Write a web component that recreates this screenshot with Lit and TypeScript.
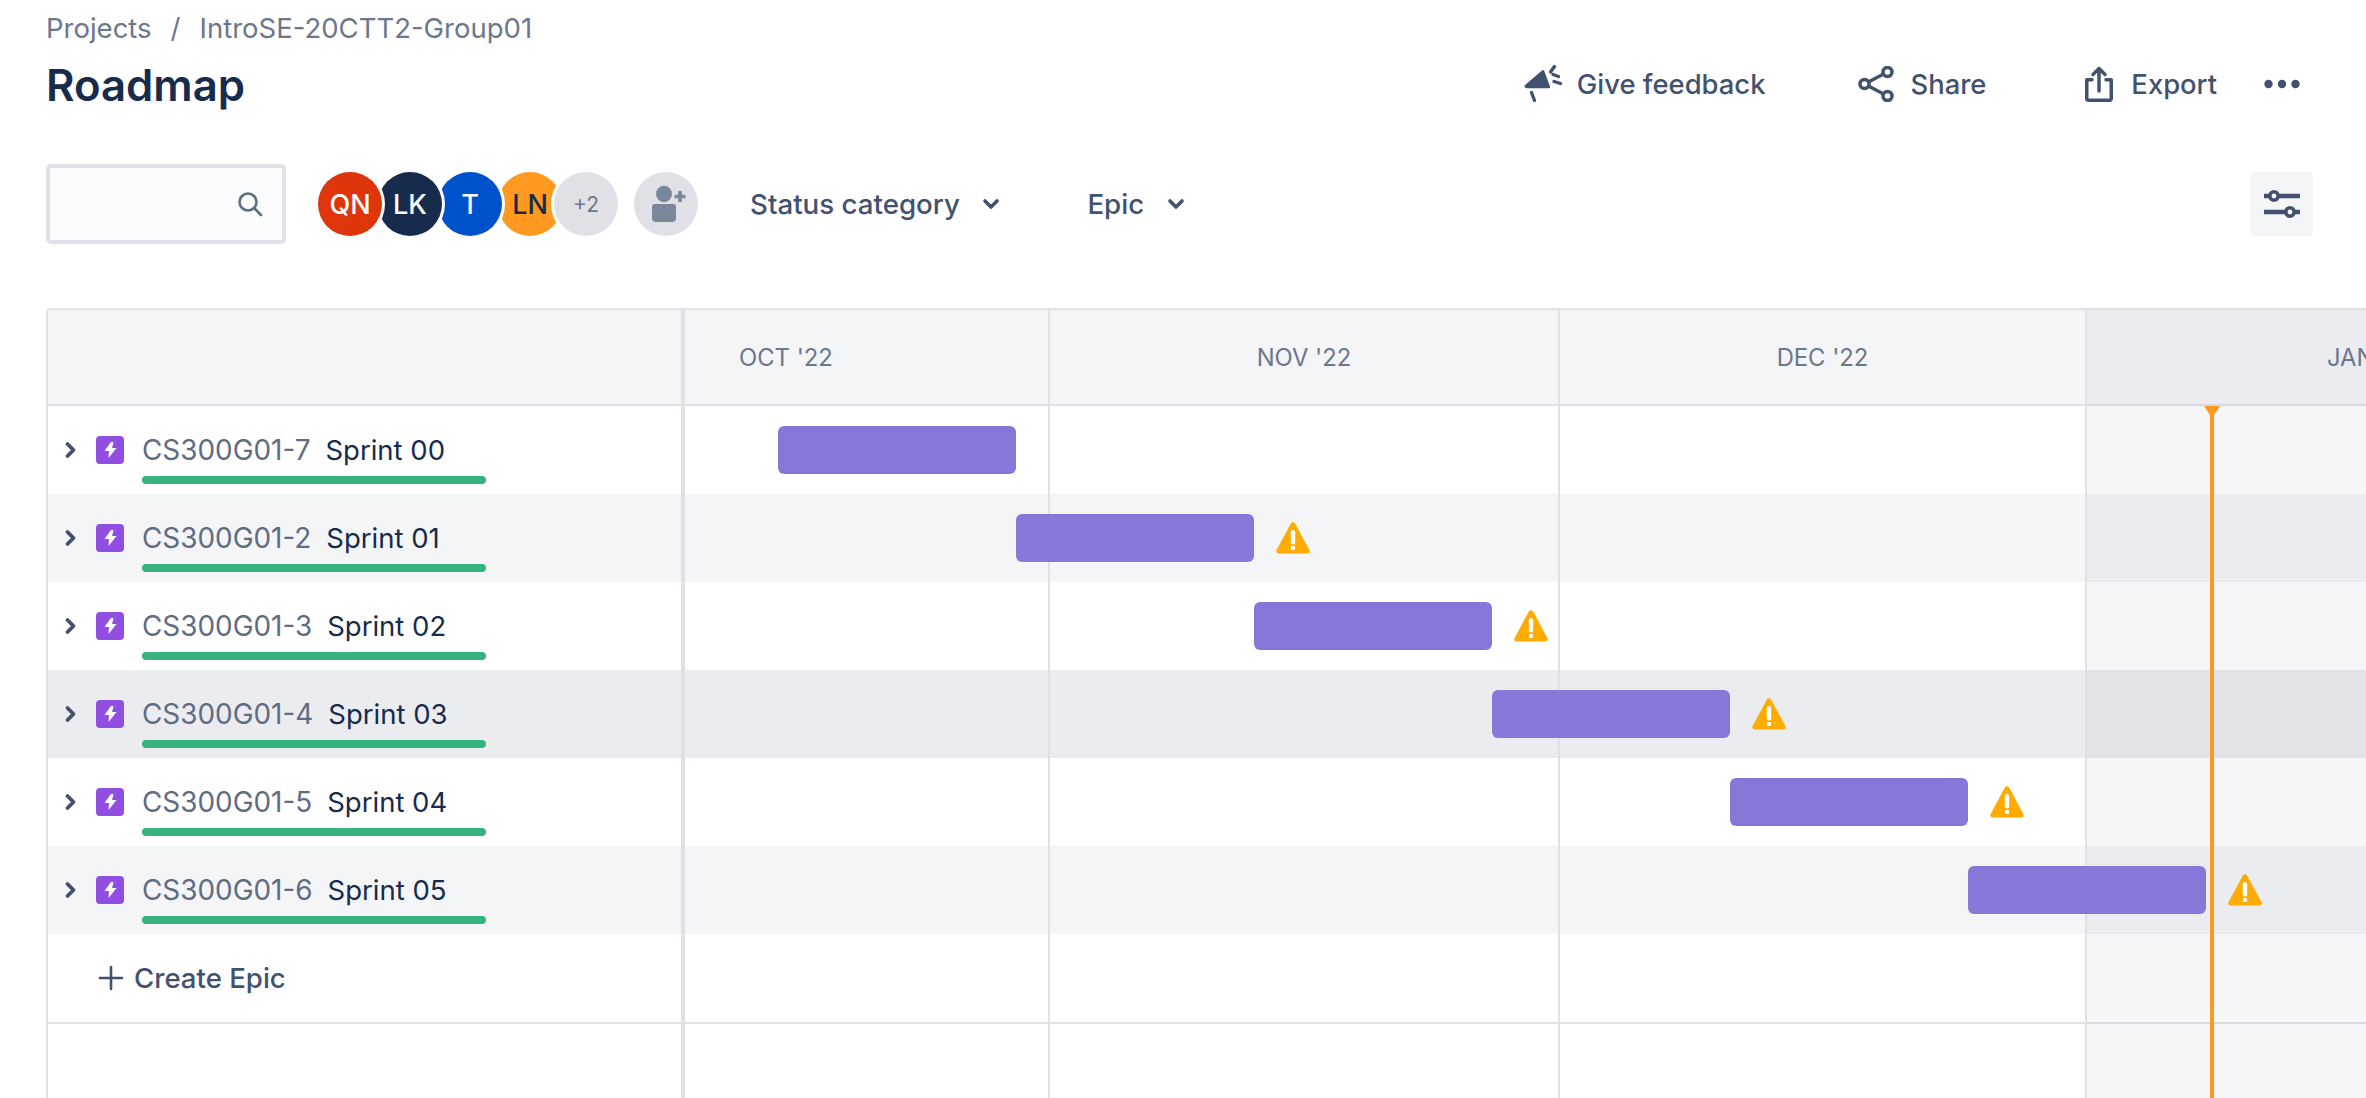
import { LitElement, html, css, svg } from 'lit';
import { customElement } from 'lit/decorators.js';

const BAR_WIDTH = 238;
const FIRST_BAR = 93;

const sprints = [
  { key: 'CS300G01-7', name: 'Sprint 00', warn: false, tone: '' },
  { key: 'CS300G01-2', name: 'Sprint 01', warn: true, tone: 'alt' },
  { key: 'CS300G01-3', name: 'Sprint 02', warn: true, tone: '' },
  { key: 'CS300G01-4', name: 'Sprint 03', warn: true, tone: 'hover' },
  { key: 'CS300G01-5', name: 'Sprint 04', warn: true, tone: '' },
  { key: 'CS300G01-6', name: 'Sprint 05', warn: true, tone: 'alt' },
];

const people = [
  { text: 'QN', cls: 'red' },
  { text: 'LK', cls: 'navy' },
  { text: 'T', cls: 'blue' },
  { text: 'LN', cls: 'orange' },
];

const megaphone = svg`<path d="M1 21 L18 6.5 a1.5 1.5 0 0 1 2.3.6 L26 22.5 a1.2 1.2 0 0 1-1.1 1.7 H2.5 a2 2 0 0 1-1.5-3.2z" fill="currentColor"/><path d="M7.5 28.5 L10.5 36.5 M26.5 8 L30.5 2.5 M29 10.5 L34.5 12.5 M30 17.5 L36.5 19.5" stroke="currentColor" stroke-width="3.4" stroke-linecap="round" fill="none"/>`;

@customElement('app-root')
export class AppRoot extends LitElement {
  static styles = css`
    :host {
      display: block;
      width: 2366px;
      height: 1098px;
      overflow: hidden;
      background: #fff;
      font-family: Inter, 'Noto Sans', sans-serif;
      color: #42526e;
    }
    .crumbs {
      display: flex;
      gap: 19px;
      padding: 12px 0 0 46px;
      height: 32px;
      font-size: 27.5px;
      line-height: 32px;
      color: #6b778c;
    }
    .title-row {
      display: flex;
      align-items: center;
      height: 66px;
      padding: 7px 0 0 46px;
    }
    h1 {
      margin: 3px 0 0;
      font-size: 43.7px;
      line-height: 56px;
      font-weight: 600;
      color: #172b4d;
    }
    .actions {
      display: flex;
      align-items: center;
      margin-left: auto;
      font-size: 27.4px;
      font-weight: 500;
      color: #42526e;
    }
    .action {
      display: flex;
      align-items: center;
      gap: 14px;
    }
    .action svg { display: block; }
    .action.feedback { margin-right: 93px; gap: 13px; }
    .action.share { margin-right: 99px; gap: 16px; }
    .action.export { margin-right: 47px; gap: 18px; }
    .dots { margin-right: 66px; display: block; }

    .toolbar {
      display: flex;
      align-items: center;
      height: 80px;
      margin-top: 47px;
      padding-left: 46px;
    }
    .search {
      box-sizing: border-box;
      width: 240px;
      height: 80px;
      border: 4px solid #dfe1e6;
      border-radius: 5px;
      background: #fafbfc;
      display: flex;
      align-items: center;
      justify-content: flex-end;
      padding-right: 19px;
    }
    .people {
      display: flex;
      margin-left: 32px;
    }
    .avatar {
      box-sizing: border-box;
      width: 64px;
      height: 64px;
      border-radius: 50%;
      display: flex;
      align-items: center;
      justify-content: center;
      font-size: 27px;
      font-weight: 500;
      color: #fff;
      box-shadow: 0 0 0 3px #fff;
      margin-right: -4px;
      position: relative;
    }
    .avatar.red { background: #de350b; z-index: 4; }
    .avatar.navy { background: #172b4d; z-index: 3; }
    .avatar.blue { background: #0052cc; z-index: 2; }
    .avatar.orange { background: #ff991f; color: #172b4d; z-index: 1; margin-right: -8px; }
    .avatar.more {
      background: #dfe1e6;
      color: #6b778c;
      font-size: 21px;
      font-weight: 400;
      z-index: 2;
      margin-right: 0;
    }
    .add {
      width: 64px;
      height: 64px;
      margin-left: 16px;
      border-radius: 50%;
      background: #dfe1e6;
      display: flex;
      align-items: center;
      justify-content: center;
    }
    .filter {
      display: flex;
      align-items: center;
      gap: 22.5px;
      font-size: 27.7px;
      font-weight: 500;
      color: #42526e;
    }
    .filter.status { margin-left: 52px; }
    .filter.epic { margin-left: 87px; }
    .view-settings {
      margin-left: auto;
      margin-right: 53px;
      width: 63px;
      height: 64px;
      border-radius: 5px;
      background: #f4f5f7;
      display: flex;
      align-items: center;
      justify-content: center;
    }

    .board {
      position: relative;
      margin: 64px 0 0 46px;
      height: 790px;
      border-left: 2px solid #dfe1e6;
      border-top: 2px solid #dfe1e6;
      border-top-left-radius: 5px;
    }
    .board-row {
      display: flex;
      height: 88px;
    }
    .board-row.head {
      height: 94px;
      background: #f4f5f7;
      border-bottom: 2px solid #dfe1e6;
    }
    .board-row.alt { background: #f4f5f7; }
    .board-row.hover { background: #ebecf0; }
    .board-row.foot {
      height: 88px;
      border-bottom: 2px solid #dfe1e6;
    }
    .side {
      box-sizing: border-box;
      width: 637px;
      flex: none;
    }
    .epic-cell {
      display: grid;
      grid-template-columns: 28px 1fr;
      grid-template-rows: 32px 8px;
      column-gap: 18px;
      row-gap: 10px;
      align-content: start;
      padding: 28px 0 0 48px;
      position: relative;
    }
    .chevron {
      position: absolute;
      left: 16px;
      top: 32px;
      display: block;
    }
    .epic-icon {
      width: 28px;
      height: 28px;
      align-self: center;
      border-radius: 4px;
      background: #904ee2;
      display: flex;
      align-items: center;
      justify-content: center;
    }
    .epic-label {
      display: flex;
      gap: 15px;
      font-size: 27.9px;
      line-height: 32px;
      white-space: nowrap;
    }
    .epic-key { color: #5e6c84; }
    .epic-name { color: #172b4d; font-weight: 400; font-size: 27.5px; }
    .progress {
      grid-column: 2;
      width: 344px;
      height: 8px;
      border-radius: 4px;
      background: #36b37e;
    }
    .create {
      display: flex;
      align-items: center;
      gap: 10px;
      padding-left: 50px;
      font-size: 27.6px;
      font-weight: 500;
      color: #42526e;
    }
    .track {
      flex: 1;
      display: flex;
      align-items: center;
      min-width: 0;
      position: relative;
      z-index: 2;
    }
    .bar {
      height: 48px;
      width: 238px;
      border-radius: 6px;
      background: #8777d9;
      flex: none;
    }
    .warn { margin-left: 22px; flex: none; display: block; }
    .months {
      flex: 1;
      font-size: 23.8px;
      color: #6b778c;
      display: grid;
      grid-template-columns: 364px 510px 527px 400px;
      align-items: center;
      white-space: nowrap;
      position: relative;
      z-index: 2;
    }
    .month { text-align: center; }
    .month.oct { text-align: left; padding-left: 54px; }
    .month.jan { text-align: left; padding-left: 241px; }

    /* grid lines and the shaded current month, under the bars */
    .overlay {
      position: absolute;
      top: 0;
      bottom: 0;
      left: 633px;
      right: 0;
      display: grid;
      grid-template-columns: 4px 365px 510px 527px 1fr;
      pointer-events: none;
      z-index: 1;
    }
    .divider { background: #dfe1e6; }
    .col { border-right: 2px solid #dfe1e6; box-sizing: border-box; }
    .col.today-col { border-right: 0; background: rgba(9, 30, 66, 0.04); }
    .today {
      position: absolute;
      top: 96px;
      bottom: 0;
      left: 2162px;
      width: 4px;
      background: #ff991f;
      z-index: 3;
    }
    .today::before {
      content: '';
      position: absolute;
      top: 0;
      left: -6px;
      border-top: 12px solid #ff991f;
      border-left: 8px solid transparent;
      border-right: 8px solid transparent;
    }
  `;

  renderRow(s: (typeof sprints)[number], i: number) {
    return html`<div class="board-row ${s.tone}">
      <div class="side epic-cell">
        <svg class="chevron" width="14" height="24" viewBox="0 0 14 24"><path d="M3.5 6 L9.5 12 L3.5 18" fill="none" stroke="#42526e" stroke-width="3.8" stroke-linecap="round" stroke-linejoin="round"/></svg>
        <div class="epic-icon">
          <svg width="13" height="16" viewBox="0 0 13 16"><path d="M7 0 L0.5 9 H5 L4.5 16 L12.5 6 H8 L9.5 0 z" fill="#fff"/></svg>
        </div>
        <div class="epic-label"><span class="epic-key">${s.key}</span><span class="epic-name">${s.name}</span></div>
        <div class="progress"></div>
      </div>
      <div class="track">
        <div class="bar" style="margin-left:${FIRST_BAR + i * BAR_WIDTH}px"></div>
        ${s.warn
          ? html`<svg class="warn" width="34" height="32" viewBox="0 0 34 32">
              <path d="M15 1.2 a2.4 2.4 0 0 1 4 0 L33.4 28 a2.4 2.4 0 0 1-2 3.6 H2.6 a2.4 2.4 0 0 1-2-3.6 z" fill="#ffab00"/>
              <rect x="14.8" y="8" width="4.4" height="14.5" rx="2.2" fill="#fff"/>
              <circle cx="17" cy="26" r="2.3" fill="#fff"/>
            </svg>`
          : ''}
      </div>
    </div>`;
  }

  render() {
    return html`
      <div class="crumbs"><span>Projects</span><span>/</span><span>IntroSE-20CTT2-Group01</span></div>
      <div class="title-row">
        <h1>Roadmap</h1>
        <div class="actions">
          <div class="action feedback">
            <svg width="40" height="40" viewBox="0 0 40 40">${megaphone}</svg>
            <span>Give feedback</span>
          </div>
          <div class="action share">
            <svg width="36" height="36" viewBox="0 0 36 36" fill="none" stroke="currentColor" stroke-width="3.5">
              <circle cx="6.5" cy="18" r="4.5"/><circle cx="29.5" cy="6" r="4.5"/><circle cx="29.5" cy="30" r="4.5"/>
              <path d="M10.5 16 L25.5 8 M10.5 20 L25.5 28"/>
            </svg>
            <span>Share</span>
          </div>
          <div class="action export">
            <svg width="28" height="36" viewBox="0 0 28 36" fill="none" stroke="currentColor" stroke-width="3.5" stroke-linejoin="round" stroke-linecap="round">
              <path d="M7 13.75 H1.75 V32.25 a2 2 0 0 0 2 2 H24.25 a2 2 0 0 0 2-2 V13.75 H21"/>
              <path d="M14 25 V2.5 M8 8.5 L14 2.5 L20 8.5"/>
            </svg>
            <span>Export</span>
          </div>
          <svg class="dots" width="36" height="10" viewBox="0 0 36 10" fill="currentColor">
            <circle cx="4.5" cy="5" r="4.2"/><circle cx="18" cy="5" r="4.2"/><circle cx="31.5" cy="5" r="4.2"/>
          </svg>
        </div>
      </div>
      <div class="toolbar">
        <div class="search">
          <svg width="26" height="26" viewBox="0 0 26 26" fill="none" stroke="#5e6c84" stroke-width="2.6" stroke-linecap="round">
            <circle cx="11" cy="11" r="8.5"/><path d="M17.5 17.5 L24 24"/>
          </svg>
        </div>
        <div class="people">
          ${people.map((p) => html`<div class="avatar ${p.cls}">${p.text}</div>`)}
          <div class="avatar more">+2</div>
        </div>
        <div class="add">
          <svg width="40" height="40" viewBox="0 0 40 40" fill="#7a869a">
            <ellipse cx="18" cy="10" rx="8" ry="8.2"/>
            <path d="M6 23 a3 3 0 0 1 3-3 H27 a3 3 0 0 1 3 3 V34 a4 4 0 0 1-4 4 H10 a4 4 0 0 1-4-4 z"/>
            <path d="M32.2 7 h3.6 v3.7 h3.7 v3.6 h-3.7 v3.7 h-3.6 v-3.7 h-3.7 v-3.6 h3.7 z"/>
          </svg>
        </div>
        <div class="filter status">Status category ${this.caret()}</div>
        <div class="filter epic">Epic ${this.caret()}</div>
        <div class="view-settings">
          <svg width="36" height="32" viewBox="0 0 36 32" fill="none" stroke="#42526e" stroke-width="4.4">
            <path d="M0 8 H5 M15 8 H36"/><circle cx="10" cy="8" r="4.2" stroke-width="3.6"/>
            <path d="M0 24 H21 M31 24 H36"/><circle cx="26" cy="24" r="4.2" stroke-width="3.6"/>
          </svg>
        </div>
      </div>
      <div class="board">
        <div class="board-row head">
          <div class="side"></div>
          <div class="months">
            <div class="month oct">OCT '22</div>
            <div class="month">NOV '22</div>
            <div class="month">DEC '22</div>
            <div class="month jan">JAN '23</div>
          </div>
        </div>
        ${sprints.map((s, i) => this.renderRow(s, i))}
        <div class="board-row foot">
          <div class="side create">
            <svg width="26" height="26" viewBox="0 0 26 26" stroke="#42526e" stroke-width="2.6" stroke-linecap="round"><path d="M13 2 V24 M2 13 H24"/></svg>
            <span>Create Epic</span>
          </div>
        </div>
        <div class="overlay">
          <div class="divider"></div>
          <div class="col"></div>
          <div class="col"></div>
          <div class="col"></div>
          <div class="col today-col"></div>
        </div>
        <div class="today"></div>
      </div>
    `;
  }

  caret() {
    return html`<svg width="18" height="12" viewBox="0 0 18 12"><path d="M3 3 L9 9 L15 3" fill="none" stroke="#42526e" stroke-width="3.6" stroke-linecap="round" stroke-linejoin="round"/></svg>`;
  }
}
